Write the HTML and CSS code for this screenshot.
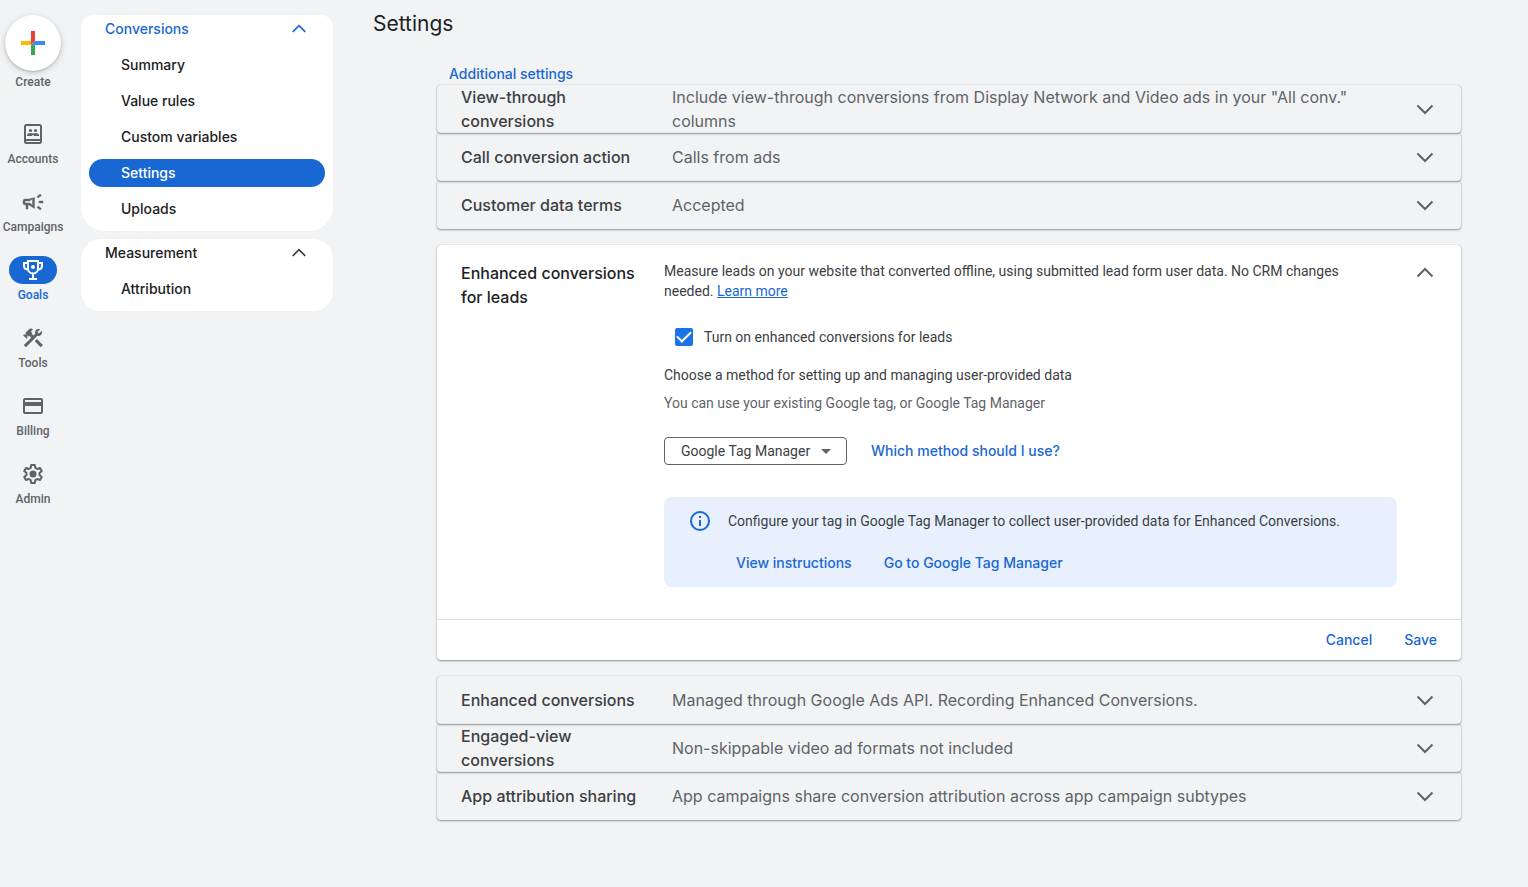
FILE: index.html
```html
<!DOCTYPE html>
<html lang="en">
<head>
  <meta charset="UTF-8" />
  <meta name="viewport" content="width=device-width, initial-scale=1" />
  <title>Settings - Conversions</title>
  <link rel="stylesheet" href="styles.css">
</head>
<body>
  <!-- Shared chevron icons -->
  <svg class="sprite" aria-hidden="true">
    <symbol id="chevron-down" viewBox="0 0 24 24"><path d="M4.5 8.5 12 16l7.500-7.500" fill="none" stroke="currentColor" stroke-width="2" /></symbol>
    <symbol id="chevron-up" viewBox="0 0 24 24"><path d="M4.500 15.500 12 8l7.500 7.500" fill="none" stroke="currentColor" stroke-width="2" /></symbol>
  </svg>

  <!-- Icon rail -->
  <nav class="rail" aria-label="Main">
    <button class="create" type="button">
      <span class="create-circle">
        <svg viewBox="0 0 24 24" width="24" height="24">
          <path fill="#ea4335" d="M10 0h4v10l-4 4z" />
          <path fill="#fbbc04" d="M0 10h10v4H0z" />
          <path fill="#34a853" d="M10 14h4v10h-4z" />
          <path fill="#4285f4" d="M14 10h10v4H10z" />
        </svg>
      </span>
      <span class="rail-label">Create</span>
    </button>
    <a class="rail-item" href="#">
      <span class="rail-icon">
        <svg viewBox="0 0 24 24">
          <path fill="none" stroke="currentColor" stroke-width="2" d="M5.500 3h13A1.500 1.500 0 0 1 20 4.500v15a1.500 1.500 0 0 1-1.500 1.500h-13A1.500 1.500 0 0 1 4 19.500v-15A1.500 1.500 0 0 1 5.500 3zM4 18h16" />
          <circle cx="9.500" cy="8.500" r="1.600" /><circle cx="14.500" cy="8.500" r="1.600" />
          <path d="M6 14v-1c0-1.300 1.600-2 3.500-2 1 0 1.900.2 2.500.6.600-.4 1.500-.6 2.500-.6 1.900 0 3.500.7 3.500 2v1h-5.300v-1h-1.400v1z" />
        </svg>
      </span>
      <span class="rail-label">Accounts</span>
    </a>
    <a class="rail-item" href="#">
      <span class="rail-icon">
        <svg viewBox="0 0 24 24">
          <path stroke="currentColor" stroke-width=".4" d="M18 11v2h4v-2zM16 17.610c.96.710 2.210 1.650 3.200 2.390l1.200-1.600c-.99-.74-2.240-1.680-3.200-2.400zM20.400 5.600 19.200 4c-.99.740-2.240 1.680-3.200 2.400l1.200 1.600c.96-.72 2.210-1.650 3.200-2.400zM4 9c-1.100 0-2 .9-2 2v2c0 1.100.9 2 2 2h1v4h2v-4h1l5.500 3.500v-11L8 9H4zm5.030 1.710L11.500 9v6l-2.470-1.710-.48-.29H4v-2h4.550z" />
        </svg>
      </span>
      <span class="rail-label">Campaigns</span>
    </a>
    <a class="rail-item active" href="#" aria-current="page">
      <span class="rail-icon">
        <svg viewBox="0 0 24 24">
          <path fill="none" stroke="currentColor" stroke-width="2" d="M7 3h10v7.500a5 5 0 0 1-10 0zM7 5H3v2.500C3 10 4.800 11.500 7 11.500M17 5h4v2.500c0 2.500-1.800 4-4 4M12 15.500V21M8 21h8" />
          <circle cx="12" cy="9" r="2" />
        </svg>
      </span>
      <span class="rail-label">Goals</span>
    </a>
    <a class="rail-item" href="#">
      <span class="rail-icon">
        <svg viewBox="0 0 24 24">
          <rect height="8.480" width="3" x="16.340" y="12.870" transform="matrix(0.7071 -0.7071 0.7071 0.7071 -6.8717 17.6255)" />
          <path d="M17.500 10c1.930 0 3.500-1.570 3.500-3.500 0-.58-.16-1.120-.41-1.600l-2.700 2.700L16.400 6.110l2.700-2.700C18.620 3.160 18.080 3 17.500 3 15.570 3 14 4.570 14 6.500c0 .41.080.8.210 1.160l-1.850 1.850-1.780-1.780.71-.71-1.410-1.410L12 3.490c-1.170-1.170-3.070-1.170-4.240 0L4.220 7.030l1.410 1.410H2.810l-.71.710 3.540 3.540.71-.71V9.150l1.410 1.410.71-.71 1.780 1.780-7.410 7.410 2.120 2.120L16.340 9.790c.36.130.75.210 1.160.21z" />
        </svg>
      </span>
      <span class="rail-label">Tools</span>
    </a>
    <a class="rail-item" href="#">
      <span class="rail-icon">
        <svg viewBox="0 0 24 24">
          <path d="M20 4H4c-1.110 0-2 .89-2 2v12c0 1.110.89 2 2 2h16c1.110 0 2-.89 2-2V6c0-1.110-.89-2-2-2zm0 14H4v-6h16v6zm0-10H4V6h16v2z" />
        </svg>
      </span>
      <span class="rail-label">Billing</span>
    </a>
    <a class="rail-item" href="#">
      <span class="rail-icon">
        <svg viewBox="0 0 24 24">
          <path fill="none" stroke="currentColor" stroke-width="2" stroke-linejoin="round" d="M10.200 3h3.600l.5 2.900 1.900 1.100 2.800-1 1.800 3.100-2.300 1.900v2l2.300 1.900-1.800 3.100-2.800-1-1.900 1.100-.5 2.900h-3.600l-.5-2.900L7.800 17 5 18l-1.800-3.100L5.500 13v-2L3.200 9.100 5 6l2.800 1 1.900-1.100z" />
          <circle cx="12" cy="12" r="3.500" />
        </svg>
      </span>
      <span class="rail-label">Admin</span>
    </a>
  </nav>

  <!-- Goals menu -->
  <nav class="side" aria-label="Goals">
    <section class="side-group">
      <button class="side-head selected" type="button" aria-expanded="true">
        Conversions <svg><use href="#chevron-up" /></svg>
      </button>
      <a class="side-link" href="#">Summary</a>
      <a class="side-link" href="#">Value rules</a>
      <a class="side-link" href="#">Custom variables</a>
      <a class="side-link active" href="#" aria-current="page">Settings</a>
      <a class="side-link" href="#">Uploads</a>
    </section>
    <section class="side-group">
      <button class="side-head" type="button" aria-expanded="true">
        Measurement <svg><use href="#chevron-up" /></svg>
      </button>
      <a class="side-link" href="#">Attribution</a>
    </section>
  </nav>

  <main class="content">
    <h1>Settings</h1>

    <div class="settings">
      <a class="additional" href="#">Additional settings</a>

      <div class="group">
        <button class="row" type="button" aria-expanded="false">
          <span class="row-name">View-through conversions</span>
          <span class="row-value">Include view-through conversions from Display Network and Video ads in your "All conv." columns</span>
          <svg class="chevron"><use href="#chevron-down" /></svg>
        </button>
        <button class="row" type="button" aria-expanded="false">
          <span class="row-name">Call conversion action</span>
          <span class="row-value">Calls from ads</span>
          <svg class="chevron"><use href="#chevron-down" /></svg>
        </button>
        <button class="row" type="button" aria-expanded="false">
          <span class="row-name">Customer data terms</span>
          <span class="row-value">Accepted</span>
          <svg class="chevron"><use href="#chevron-down" /></svg>
        </button>
      </div>

      <!-- Open panel -->
      <form class="panel">
        <div class="panel-main">
          <h2>Enhanced conversions for leads</h2>
          <div class="panel-body">
            <p class="intro">Measure leads on your website that converted offline, using submitted lead form user data. No CRM changes needed. <a class="learn" href="#">Learn more</a></p>
            <div class="check">
              <input type="checkbox" id="leads" checked />
              <label for="leads">Turn on enhanced conversions for leads</label>
            </div>
            <label class="method-label" for="method">Choose a method for setting up and managing user-provided data</label>
            <p class="hint">You can use your existing Google tag, or Google Tag Manager</p>
            <div class="method">
              <select id="method">
                <option>Google Tag Manager</option>
                <option>Google tag</option>
              </select>
              <a class="action" href="#">Which method should I use?</a>
            </div>
            <div class="callout">
              <svg class="info" viewBox="0 0 24 24">
                <circle cx="12" cy="12" r="9" fill="none" stroke="currentColor" stroke-width="2" />
                <path d="M11 11h2v6h-2zM11 7h2v2h-2z" />
              </svg>
              <div class="callout-text">
                <p>Configure your tag in Google Tag Manager to collect user-provided data for Enhanced Conversions.</p>
                <div class="callout-links">
                  <a class="action" href="#">View instructions</a>
                  <a class="action" href="#">Go to Google Tag Manager</a>
                </div>
              </div>
            </div>
          </div>
          <button class="collapse" type="button" aria-label="Collapse" aria-expanded="true">
            <svg class="chevron"><use href="#chevron-up" /></svg>
          </button>
        </div>
        <div class="panel-footer">
          <button class="text-button" type="button">Cancel</button>
          <button class="text-button" type="submit">Save</button>
        </div>
      </form>

      <div class="group">
        <button class="row" type="button" aria-expanded="false">
          <span class="row-name">Enhanced conversions</span>
          <span class="row-value">Managed through Google Ads API. Recording Enhanced Conversions.</span>
          <svg class="chevron"><use href="#chevron-down" /></svg>
        </button>
        <button class="row" type="button" aria-expanded="false">
          <span class="row-name">Engaged-view conversions</span>
          <span class="row-value">Non-skippable video ad formats not included</span>
          <svg class="chevron"><use href="#chevron-down" /></svg>
        </button>
        <button class="row" type="button" aria-expanded="false">
          <span class="row-name">App attribution sharing</span>
          <span class="row-value">App campaigns share conversion attribution across app campaign subtypes</span>
          <svg class="chevron"><use href="#chevron-down" /></svg>
        </button>
      </div>
    </div>
  </main>
</body>
</html>
```
FILE: styles.css
```css
* {
  box-sizing: border-box;
}

body {
  margin: 0;
  min-height: 100vh;
  display: flex;
  align-items: flex-start;
  font-family: Roboto, Arial, sans-serif;
  font-size: 14px;
  line-height: 20px;
  color: #3c4043;
  background: #f1f3f4;
}

h1, h2, p {
  margin: 0;
}

a {
  color: #1967d2;
  text-decoration: none;
}

button {
  padding: 0;
  border: none;
  background: none;
  color: inherit;
  font: inherit;
  text-align: left;
  cursor: pointer;
}

svg {
  fill: currentColor;
}

.sprite {
  display: none;
}

/* Icon rail */
.rail {
  flex: none;
  width: 66px;
  padding-top: 15px;
  display: flex;
  flex-direction: column;
  align-items: center;
  gap: 19px;
}

.create {
  display: flex;
  flex-direction: column;
  align-items: center;
  gap: 1px;
  margin-bottom: 9px;
  color: #5f6368;
}

.create-circle {
  width: 56px;
  height: 56px;
  display: flex;
  align-items: center;
  justify-content: center;
  border-radius: 50%;
  background: #fff;
  box-shadow: 0 1px 2px rgba(60, 64, 67, 0.25), 0 2px 6px rgba(60, 64, 67, 0.2);
}

.rail-item {
  display: flex;
  flex-direction: column;
  align-items: center;
  gap: 1px;
  color: #5f6368;
}

.rail-icon {
  width: 48px;
  height: 28px;
  display: flex;
  align-items: center;
  justify-content: center;
  border-radius: 14px;
}

.rail-icon svg {
  width: 24px;
  height: 24px;
}

.rail-label {
  font-size: 12px;
  font-weight: 500;
  line-height: 20px;
}

.rail-item.active {
  color: #1967d2;
}

.rail-item.active .rail-icon {
  background: #1967d2;
  color: #fff;
}

/* Side menu */
.side {
  flex: none;
  width: 252px;
  margin: 15px 0 0 15px;
  display: flex;
  flex-direction: column;
  gap: 8px;
  font-family: Inter, Roboto, sans-serif;
  font-weight: 500;
  color: #202124;
}

.side-group {
  padding: 0 8px 8px;
  display: flex;
  flex-direction: column;
  gap: 8px;
  border-radius: 20px;
  background: #fff;
}

.side-group:first-child {
  border-radius: 12px 12px 24px 24px;
}

.side-head {
  height: 28px;
  padding: 0 16px;
  display: flex;
  align-items: center;
  justify-content: space-between;
}

.side-head svg {
  width: 20px;
  height: 20px;
  color: #3c4043;
}

.side-head.selected,
.side-head.selected svg {
  color: #1967d2;
}

.side-link {
  padding: 4px 32px;
  border-radius: 14px;
  color: #202124;
}

.side-link.active {
  background: #1967d2;
  color: #fff;
}

/* Content */
.content {
  flex: 1;
  padding: 8px 67px 66px 40px;
}

h1 {
  font-family: Inter, Roboto, sans-serif;
  font-size: 21px;
  font-weight: 400;
  line-height: 32px;
  color: #202124;
}

.settings {
  margin: 24px 0 0 64px;
  display: flex;
  flex-direction: column;
}

.additional {
  align-self: flex-start;
  padding: 0 0 1px 12px;
  font-family: Inter, Roboto, sans-serif;
  font-weight: 500;
}

.group {
  display: flex;
  flex-direction: column;
}

/* No background here, so the shadow of the row above stays visible */
.row {
  width: 100%;
  min-height: 48px;
  padding-left: 24px;
  display: grid;
  grid-template-columns: 187px 1fr 64px;
  align-items: center;
  border-radius: 4px;
  box-shadow: 0 0 1px rgba(60, 64, 67, 0.3), 0 1px 2px rgba(60, 64, 67, 0.5);
  font-family: Inter, Roboto, sans-serif;
  font-size: 16px;
  line-height: 24px;
}

.row-name {
  font-weight: 500;
  color: #3c4043;
}

.row-value {
  padding-left: 24px;
  color: #5f6368;
}

.chevron {
  width: 24px;
  height: 24px;
  margin-left: 16px;
  color: #5f6368;
}

/* Open panel */
.panel {
  margin: 16px 0;
  border-radius: 4px;
  background: #fff;
  box-shadow: 0 0 1px rgba(60, 64, 67, 0.3), 0 1px 2px rgba(60, 64, 67, 0.5);
}

.panel-main {
  padding: 16px 0 32px 24px;
  display: grid;
  grid-template-columns: 203px 1fr 64px;
  align-items: start;
}

h2 {
  padding-right: 24px;
  font-family: Inter, Roboto, sans-serif;
  font-size: 16px;
  font-weight: 500;
  line-height: 24px;
  color: #202124;
}

.intro {
  padding-right: 24px;
}

.learn {
  text-decoration: underline;
}

.check {
  margin: 26px 0 18px;
  padding-left: 11px;
  display: flex;
  align-items: center;
  gap: 11px;
}

.check input {
  appearance: none;
  width: 18px;
  height: 18px;
  margin: 0;
  display: grid;
  place-items: center;
  border: 2px solid #5f6368;
  border-radius: 2px;
}

.check input:checked {
  border-color: #1a73e8;
  background: #1a73e8;
}

.check input:checked::before {
  content: "";
  width: 12px;
  height: 6px;
  margin-bottom: 4px;
  border: solid #fff;
  border-width: 0 0 2px 2px;
  rotate: -45deg;
}

.method-label {
  display: block;
}

.hint {
  margin-top: 8px;
  color: #5f6368;
}

.method {
  margin: 24px 0 32px;
  display: flex;
  align-items: center;
  gap: 24px;
}

.method select {
  appearance: none;
  width: 183px;
  height: 28px;
  padding: 0 16px;
  border: 1px solid #5f6368;
  border-radius: 4px;
  color: #3c4043;
  font: inherit;
  background: url("data:image/svg+xml,%3Csvg xmlns='http://www.w3.org/2000/svg' viewBox='0 0 10 5'%3E%3Cpath fill='%235f6368' d='M0 0h10L5 5z'/%3E%3C/svg%3E") no-repeat right 15px center / 10px 5px #fff;
}

.action {
  font-family: Inter, Roboto, sans-serif;
  font-weight: 500;
}

.callout {
  padding: 12px 24px 14px;
  display: flex;
  gap: 16px;
  border-radius: 8px;
  background: #e8f0fe;
}

.info {
  flex: none;
  width: 24px;
  height: 24px;
  color: #1967d2;
}

.callout-text {
  padding-top: 2px;
}

.callout-links {
  margin: 22px 0 0 8px;
  display: flex;
  gap: 32px;
}

.panel-footer {
  padding: 10px 24px;
  display: flex;
  justify-content: flex-end;
  gap: 32px;
  border-top: 1px solid #dadce0;
}

.text-button {
  font-family: Inter, Roboto, sans-serif;
  font-weight: 500;
  color: #1967d2;
}
```
